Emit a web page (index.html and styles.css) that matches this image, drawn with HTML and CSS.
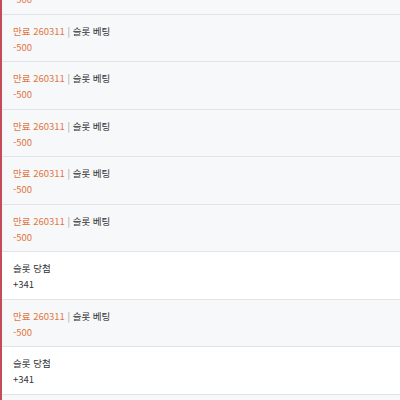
FILE: index.html
```html
<!DOCTYPE html>
<html lang="ko">
<head>
<meta charset="utf-8">
<link rel="stylesheet" href="styles.css">
</head>
<body>
<div class="list">
  <div class="row bet partial-top"><div class="amt minus">-500</div></div>
  <div class="row bet"><div class="title"><span class="tag">만료 260311</span> <span class="sep">|</span> 슬롯 베팅</div><div class="amt minus">-500</div></div>
  <div class="row bet"><div class="title"><span class="tag">만료 260311</span> <span class="sep">|</span> 슬롯 베팅</div><div class="amt minus">-500</div></div>
  <div class="row bet"><div class="title"><span class="tag">만료 260311</span> <span class="sep">|</span> 슬롯 베팅</div><div class="amt minus">-500</div></div>
  <div class="row bet"><div class="title"><span class="tag">만료 260311</span> <span class="sep">|</span> 슬롯 베팅</div><div class="amt minus">-500</div></div>
  <div class="row bet"><div class="title"><span class="tag">만료 260311</span> <span class="sep">|</span> 슬롯 베팅</div><div class="amt minus">-500</div></div>
  <div class="row win"><div class="title">슬롯 당첨</div><div class="amt plus">+341</div></div>
  <div class="row bet"><div class="title"><span class="tag">만료 260311</span> <span class="sep">|</span> 슬롯 베팅</div><div class="amt minus">-500</div></div>
  <div class="row win"><div class="title">슬롯 당첨</div><div class="amt plus">+341</div></div>
  <div class="row bet partial-bottom"></div>
</div>
</body>
</html>
```

FILE: styles.css
```css
html, body {
  margin: 0;
  padding: 0;
  background: #fff;
  overflow: hidden;
  height: 400px;
}
body {
  font-family: "Noto Sans CJK KR", "Noto Sans", sans-serif;
  color: #333;
}
.list {
  border-left: 2px solid #c24c57;
  height: 400px;
  overflow: hidden;
}
.row {
  box-sizing: border-box;
  height: 47.5px;
  padding: 9px 11px 0;
  border-bottom: 1px solid #e2e3e5;
}
.row.bet { background: #f7f8fa; }
.row.win { background: #fff; }
.row.partial-top {
  display: flow-root;
  height: 14.5px;
  padding-top: 0;
}
.row.partial-top .amt {
  margin-top: -9px;
}
.row.partial-bottom {
  height: 10px;
  border-bottom: 0;
}
.title {
  font-size: 9.5px;
  line-height: 15px;
  color: #333;
  white-space: nowrap;
}
.tag { color: #e0773f; }
.sep { color: #999; }
.amt {
  font-size: 9.5px;
  line-height: 16px;
}
.amt.minus { color: #e0773f; }
.amt.plus { color: #333; }
```
